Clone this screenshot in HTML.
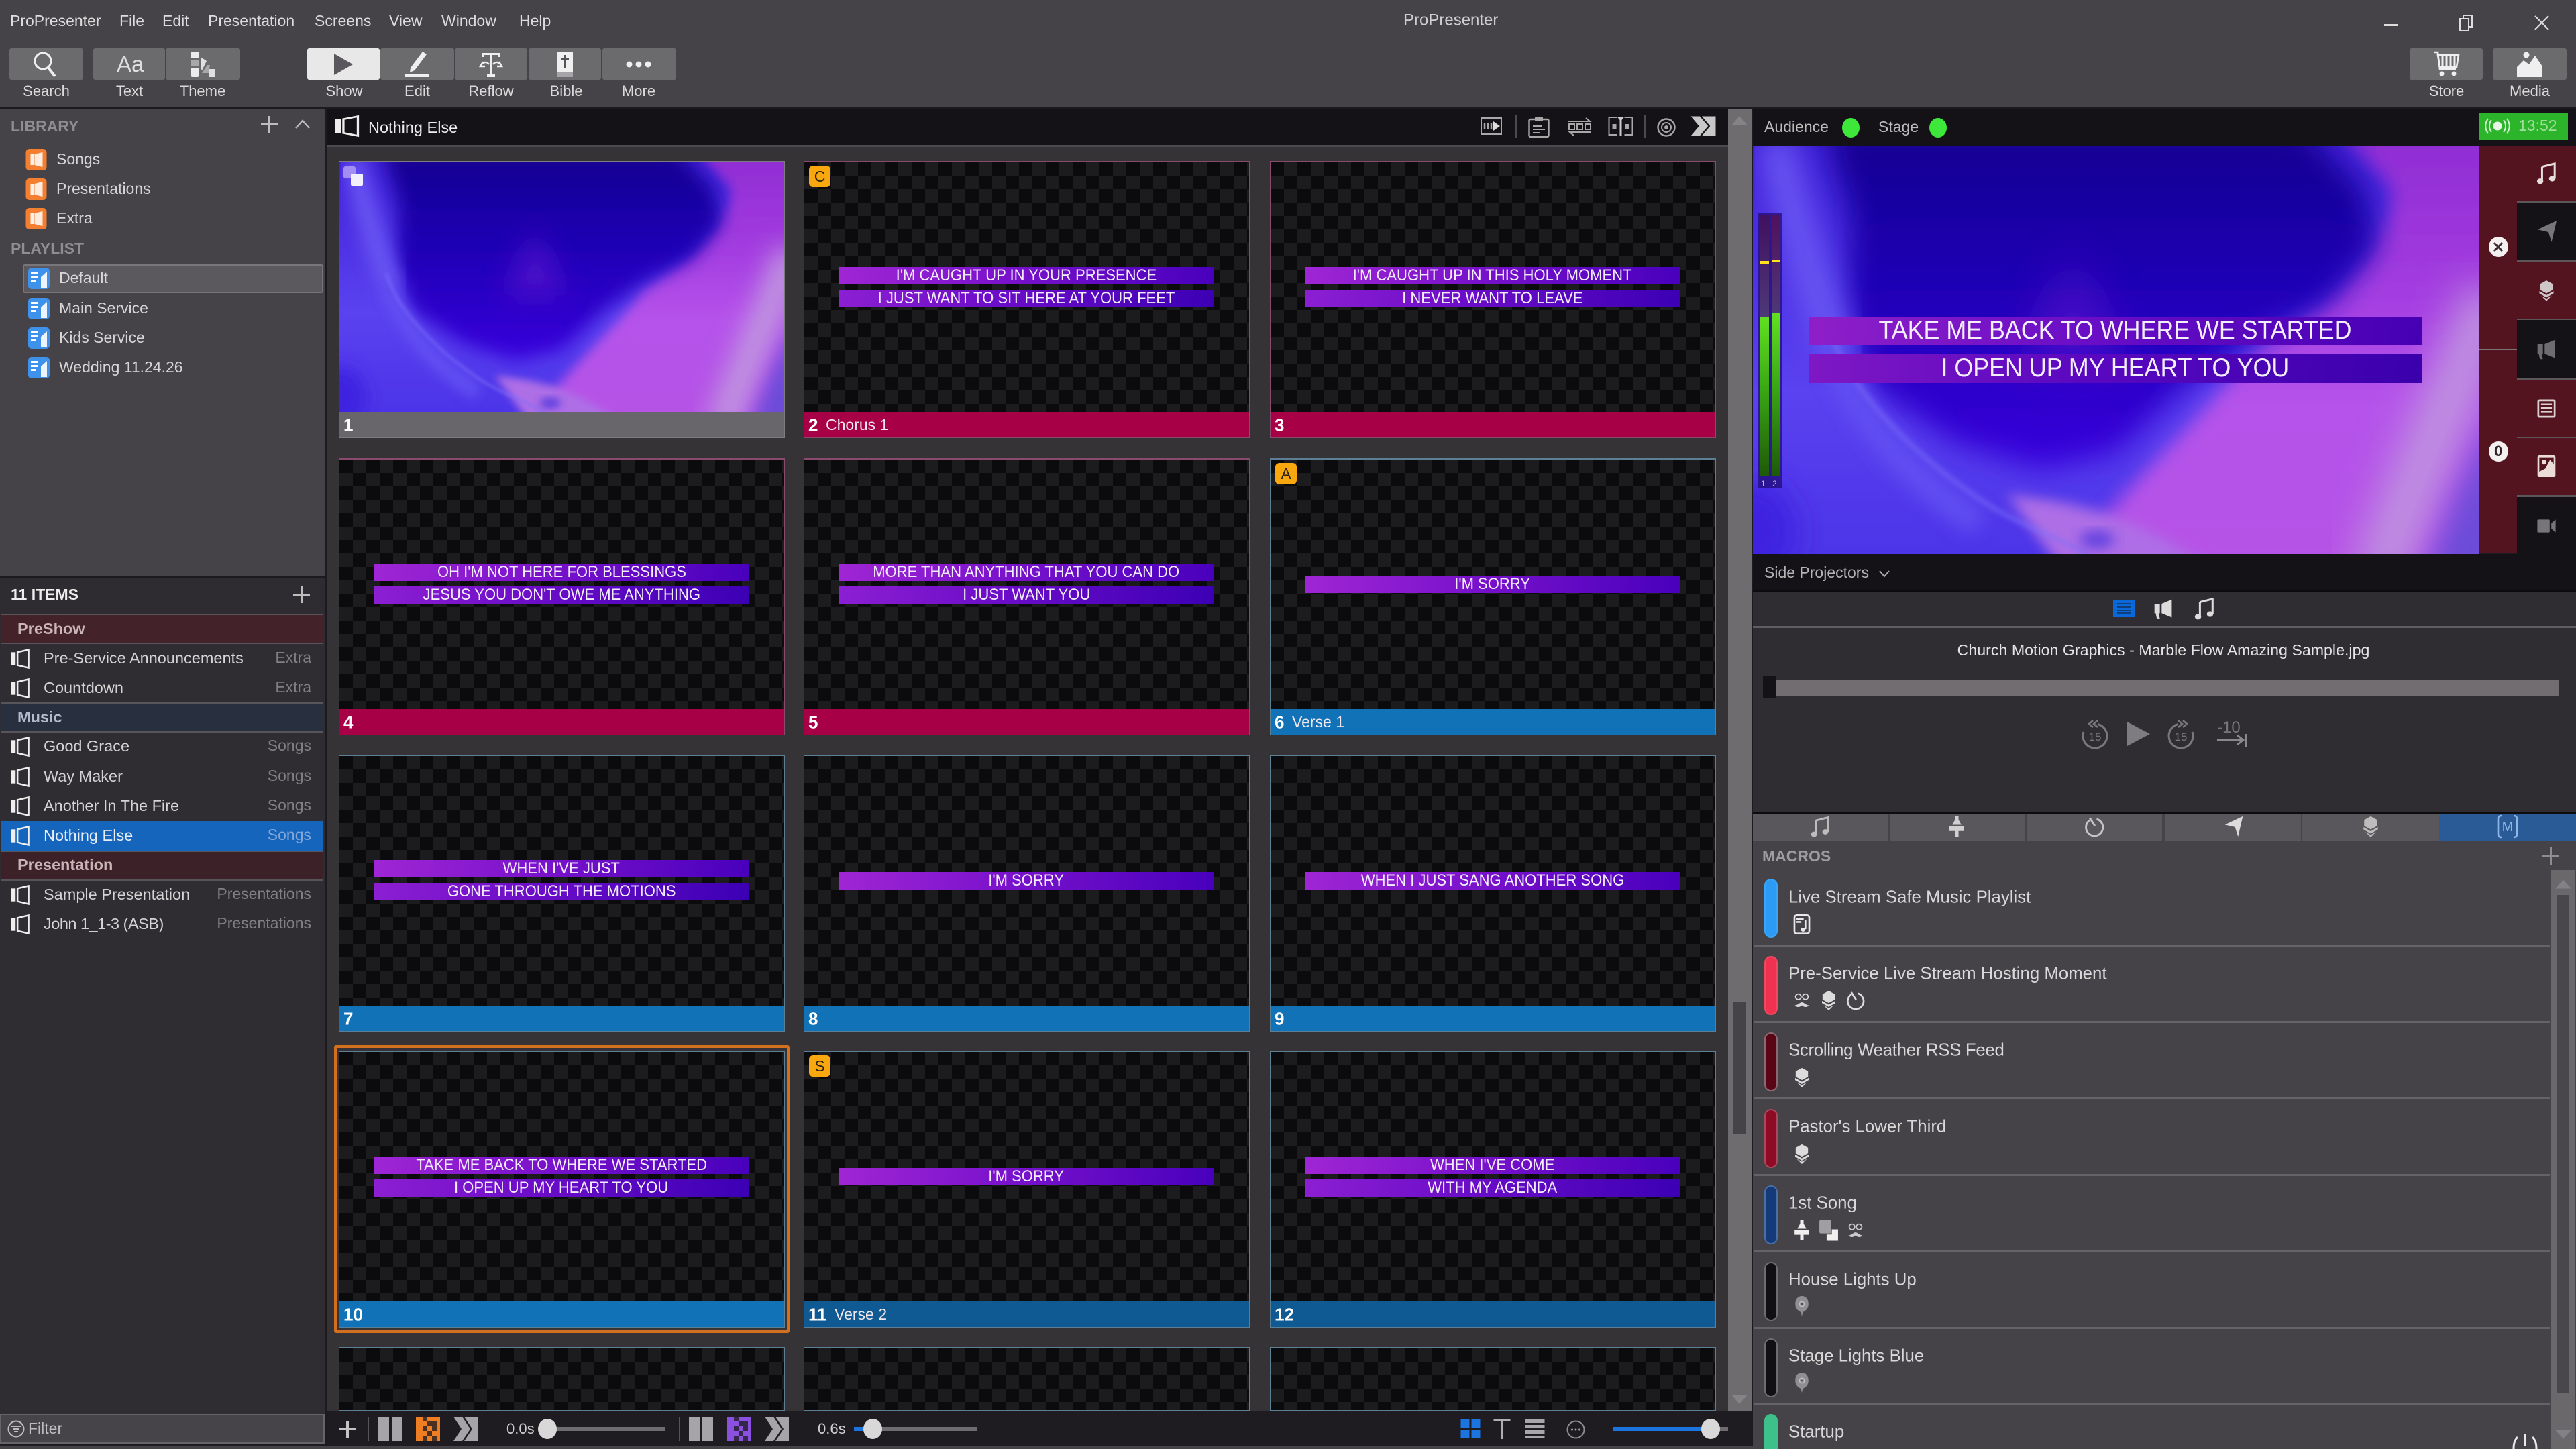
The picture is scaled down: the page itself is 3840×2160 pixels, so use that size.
<!DOCTYPE html>
<html><head><meta charset="utf-8"><title>ProPresenter</title>
<style>
html,body{margin:0;padding:0;background:#1e1c20;width:3840px;height:2160px;overflow:hidden}
#r{position:relative;width:3840px;height:2160px;overflow:hidden;background:#1e1c20;font-family:"Liberation Sans",sans-serif;color:#d8d8d8}
.a{position:absolute}
.t{position:absolute;white-space:nowrap;transform:translateY(-50%);line-height:1.2}
.m{font-size:23px;top:32px;color:#dcdcdc}
.tb{position:absolute;top:72px;height:47px;background:#6b6a6d;border-radius:3px}
.lbl{position:absolute;top:136px;transform:translate(-50%,-50%);font-size:22px;color:#dadada;white-space:nowrap;line-height:1.2}
.ic{position:absolute;transform:translate(-50%,-50%);overflow:visible}
.sec{font-size:23px;font-weight:bold;color:#8f8d90;left:16px}
.ln{font-size:23px;color:#d6d6d6}
.row{font-size:23.5px;color:#d4d4d4;left:65px;margin-top:-1px}
.tag{font-size:23px;color:#827f82;right:3376px;margin-top:-1px}
.hd{position:absolute;left:2px;width:480px;height:41px;border-top:2px solid #575559;border-bottom:2px solid #575559}
.hdt{position:absolute;left:26px;font-size:23.5px;font-weight:bold}
.s{position:absolute;width:665px;height:413px;box-sizing:border-box;overflow:hidden}
.s:before{content:"";position:absolute;left:0;top:0;right:0;bottom:0;z-index:3;border:1px solid #8a4a6e;border-top-width:2px;box-sizing:border-box}
.s.bl:before,.s.db:before{border-color:#5d7f96}
.s.gr:before{border-color:#7e7c7f}
.im{position:absolute;left:1px;top:2px;width:663px;height:372px;background-color:#0b0a0d;background-image:conic-gradient(#1c1b1e 0 25%,#0b0a0d 0 50%,#1c1b1e 0 75%,#0b0a0d 0);background-size:40px 40px}
.b{position:absolute;left:52px;width:558px;height:26px;text-align:center;color:#f2ecf8;font-size:23.7px;line-height:26px;white-space:nowrap}
.b i,.pv i{display:inline-block;font-style:normal;transform:scaleX(.93)}
.b1{background:linear-gradient(97deg,#9f26d4,#7a12cc 45%,#4800bc)}
.b2{background:linear-gradient(97deg,#8c1fd2,#6a0cc8 45%,#3c00b4)}
.lb{position:absolute;left:0;top:374px;width:100%;height:39px;color:#fff}
.pk .lb{background:#a80046}.bl .lb{background:#1272b8}.db .lb{background:#0f5a92}.gr .lb{background:#68666a}
.lb b{position:absolute;left:7px;top:50%;transform:translateY(-50%);font-size:26px;line-height:1.2}
.lb span{position:absolute;left:33px;top:50%;transform:translateY(-50%);font-size:23px;color:#f0e8ee;white-space:nowrap;line-height:1.2}
.bdg{position:absolute;left:8px;top:7px;width:32px;height:32px;border-radius:6px;background:#f9a70f;color:#2c2414;font-size:23px;line-height:32px;text-align:center;z-index:4}
.mp{position:absolute;left:2630px;width:16px;height:84px;border-radius:10px;border:2px solid}
.mt{left:2666px;font-size:25.8px;color:#d8d8d8}
.ms{position:absolute;left:2614px;width:1187px;height:3px;background:#656367}
</style></head><body>
<div id="r">
<svg width="0" height="0" style="position:absolute">
<defs>
<filter id="f40" x="-60%" y="-60%" width="220%" height="220%"><feGaussianBlur stdDeviation="32"/></filter>
<filter id="f22" x="-30%" y="-30%" width="160%" height="160%"><feGaussianBlur stdDeviation="20"/></filter>
<filter id="f30" x="-40%" y="-40%" width="180%" height="180%"><feGaussianBlur stdDeviation="28"/></filter>
<filter id="f14" x="-30%" y="-30%" width="160%" height="160%"><feGaussianBlur stdDeviation="13"/></filter>
<filter id="f7" x="-30%" y="-30%" width="160%" height="160%"><feGaussianBlur stdDeviation="9"/></filter>
<filter id="f3" x="-30%" y="-30%" width="160%" height="160%"><feGaussianBlur stdDeviation="3.5"/></filter>
<linearGradient id="bg1" x1="0" y1="0" x2="0" y2="1"><stop offset="0" stop-color="#12008e"/><stop offset=".45" stop-color="#1e00b4"/><stop offset="1" stop-color="#3800dc"/></linearGradient>
<linearGradient id="bg0" x1="0" y1="0" x2="0" y2="1"><stop offset="0" stop-color="#4020d8"/><stop offset=".6" stop-color="#5a42f0"/><stop offset="1" stop-color="#4c34e8"/></linearGradient>
<linearGradient id="bg2" x1="0" y1="0" x2="0" y2="1"><stop offset="0" stop-color="#8e2bd2"/><stop offset=".35" stop-color="#a23ce0"/><stop offset=".6" stop-color="#b552ea"/><stop offset="1" stop-color="#b654e6"/></linearGradient>
</defs>
<symbol id="marble" viewBox="0 0 1000 562" preserveAspectRatio="none">
<rect width="1000" height="562" fill="url(#bg0)"/>
<path filter="url(#f14)" d="M420 600C500 470 600 400 680 290C760 230 870 170 880 60L800-30L1040-30V600Z" fill="url(#bg2)"/>
<path filter="url(#f30)" d="M1015 200C985 300 925 420 860 600" fill="none" stroke="#c094e0" stroke-width="72"/>
<path filter="url(#f22)" d="M1030 360V600H925C955 510 985 440 1030 360Z" fill="#6a4cd8"/>
<path filter="url(#f7)" d="M350 480C430 490 520 500 640 590H430Z" fill="#ae6ee6"/>
<path filter="url(#f22)" d="M99-30L135 100L128 233L164 334L281 411L398 446L500 423L595 334L682 271L792 217L858 139L843 61L755-30Z" fill="url(#bg1)"/>
<path filter="url(#f40)" d="M440 150L510 300H370Z" fill="#5c14cc" opacity=".75"/>
<path filter="url(#f22)" d="M30-10C60 120 90 220 122 290" fill="none" stroke="#6a58f4" stroke-width="46"/>
<path filter="url(#f14)" d="M110 290C150 380 205 450 310 520" fill="none" stroke="#6250f2" stroke-width="34"/>
<path filter="url(#f3)" d="M105 250C130 330 205 410 300 478C360 522 430 540 470 570" fill="none" stroke="#7e70fa" stroke-width="6" opacity=".6"/>
<ellipse filter="url(#f7)" cx="474" cy="542" rx="24" ry="12" fill="#5e40e0"/>
<ellipse filter="url(#f22)" cx="0" cy="530" rx="60" ry="70" fill="#3c24e0"/>
</symbol>
<symbol id="pres" viewBox="0 0 30 32"><path d="M1 6h7v20H1z" fill="#eee"/><path d="M11 6L28 2V30L11 26Z" fill="none" stroke="#eee" stroke-width="2.6"/></symbol>
<symbol id="lib" viewBox="0 0 31 32"><rect width="31" height="32" rx="5" fill="#f47f31"/><path d="M7 8h5v16H7z" fill="#fff" opacity=".9"/><path d="M13 8L25 5V27L13 24Z" fill="#fff" opacity=".85"/></symbol>
<symbol id="pl" viewBox="0 0 32 32"><rect width="32" height="32" rx="5" fill="#3f92ec"/><path d="M4 6h11v3H4zM4 12h11v3H4zM4 18h8v3H4z" fill="#fff"/><path d="M19 14L28 6V30H19Z" fill="#fff" opacity=".9"/></symbol>
<symbol id="note" viewBox="0 0 32 36"><path d="M9 8L29 3V27" fill="none" stroke="currentColor" stroke-width="3.2"/><path d="M9 8V31" fill="none" stroke="currentColor" stroke-width="3.2"/><ellipse cx="6" cy="31" rx="5" ry="4.4" fill="currentColor"/><ellipse cx="25" cy="27" rx="5" ry="4.4" fill="currentColor"/></symbol>
<symbol id="send" viewBox="0 0 32 36"><path d="M31 1L1 15L18 19L23 35Z" fill="currentColor"/></symbol>
<symbol id="layers" viewBox="0 0 32 36"><path d="M16 1L27 7V17L16 23L5 17V7Z" fill="currentColor"/><path d="M4 19L16 26L28 19V23L16 30L4 23Z" fill="currentColor"/><path d="M7 27L16 32L25 27L16 36Z" fill="currentColor"/></symbol>
<symbol id="mega" viewBox="0 0 32 36"><path d="M1 9h9v16H8l2 9H5l-2-9H1z" fill="currentColor"/><path d="M13 9L30 2V32L13 25Z" fill="currentColor"/></symbol>
<symbol id="doc" viewBox="0 0 30 30"><rect x="1.5" y="1.5" width="27" height="27" rx="2" fill="none" stroke="currentColor" stroke-width="3"/><path d="M6 8h18M6 14h18M6 20h18" stroke="currentColor" stroke-width="2.6"/></symbol>
<symbol id="pic" viewBox="0 0 30 36"><path d="M3 0H27a3 3 0 0 1 3 3V33a3 3 0 0 1-3 3H3a3 3 0 0 1-3-3V3a3 3 0 0 1 3-3Z" fill="currentColor"/><path d="M3 3H27V14L21 7L13 22L3 27Z" fill="#54141f"/><circle cx="11" cy="11" r="4" fill="currentColor"/></symbol>
<symbol id="cam" viewBox="0 0 34 30"><rect x="0" y="3" width="23" height="24" rx="2" fill="currentColor"/><path d="M26 10L34 3V27L26 20Z" fill="currentColor"/></symbol>
<symbol id="spot" viewBox="0 0 26 36"><path d="M10 0h6v6l5 9H5l5-9Z" fill="currentColor"/><path d="M0 17H26V26H16V36H10V26H0Z" fill="currentColor"/></symbol>
<symbol id="clock" viewBox="0 0 34 38"><path d="M21 6A15 15 0 1 1 9 8" fill="none" stroke="currentColor" stroke-width="3.4"/><path d="M9 4L18 18" stroke="currentColor" stroke-width="3.4"/></symbol>
<symbol id="mask" viewBox="0 0 32 32"><circle cx="9" cy="9" r="5.5" fill="none" stroke="currentColor" stroke-width="2.4"/><circle cx="23" cy="9" r="5.5" fill="none" stroke="currentColor" stroke-width="2.4"/><path d="M2 26C8 26 12 20 16 20C20 20 24 26 30 26C26 31 20 30 16 26C12 30 6 31 2 26Z" fill="currentColor"/></symbol>
<symbol id="copy" viewBox="0 0 36 40"><rect x="0" y="0" width="23" height="26" rx="3" fill="#a09ea2"/><path d="M24 18h12v22H14V28h10Z" fill="#f0f0f0"/></symbol>
<symbol id="bulb" viewBox="0 0 26 40"><path d="M13 0C21 0 26 6 26 16C26 26 19 30 15 32L13 40L11 32C7 30 0 26 0 16C0 6 5 0 13 0Z" fill="#908e92"/><circle cx="13" cy="16" r="5" fill="none" stroke="#c0c0c0" stroke-width="2"/><circle cx="13" cy="16" r="1.6" fill="#555"/></symbol>
<symbol id="mlist" viewBox="0 0 28 34"><rect x="1.5" y="1.5" width="25" height="31" rx="4" fill="none" stroke="currentColor" stroke-width="3"/><path d="M5 8h12M5 13h8" stroke="currentColor" stroke-width="3"/><path d="M20 10V25" stroke="currentColor" stroke-width="3"/><ellipse cx="16" cy="26" rx="4" ry="3.4" fill="currentColor"/></symbol>
<symbol id="cuts" viewBox="0 0 36 36"><rect x="0" y="0" width="16" height="36" fill="currentColor"/><rect x="20" y="0" width="16" height="36" fill="currentColor"/></symbol>
<symbol id="chev" viewBox="0 0 36 36"><path d="M0 0H13L25 18L13 36H0L12 18ZM16 0H36V36H16L28 18Z" fill="currentColor"/></symbol>
<symbol id="chk" viewBox="0 0 36 36"><path d="M0 0H36V36H0Z" fill="currentColor"/><path d="M10 0h7v7h-7zM24 7h7v7h-7zM17 7h7v7h-7zM10 14h7v7h-7zM24 14h7v7h-7zM17 21h7v7h-7zM10 28h7v8h-7zM24 28h7v8h-7z" fill="#1e1c20" opacity=".78"/></symbol>
</svg>

<!-- top bar -->
<div class="a" style="left:0;top:0;width:3840px;height:160px;background:#454347"></div>
<div class="a" style="left:0;top:160px;width:3840px;height:2px;background:#1c1a1e"></div>
<div class="t m" style="left:15px">ProPresenter</div>
<div class="t m" style="left:178px">File</div>
<div class="t m" style="left:242px">Edit</div>
<div class="t m" style="left:310px">Presentation</div>
<div class="t m" style="left:469px">Screens</div>
<div class="t m" style="left:580px">View</div>
<div class="t m" style="left:658px">Window</div>
<div class="t m" style="left:774px">Help</div>
<div class="t" style="left:2092px;top:31px;font-size:24px;color:#cfcfcf">ProPresenter</div>
<div class="a" style="left:3554px;top:36px;width:20px;height:3px;background:#ddd"></div>
<svg class="ic" style="left:3676px;top:34px" width="20" height="24" viewBox="0 0 20 24"><rect x="1" y="6" width="13" height="17" fill="none" stroke="#ddd" stroke-width="2"/><path d="M6 5V1H19V18H15" fill="none" stroke="#ddd" stroke-width="2"/></svg>
<svg class="ic" style="left:3789px;top:34px" width="22" height="22" viewBox="0 0 22 22"><path d="M1 1L21 21M21 1L1 21" stroke="#ddd" stroke-width="2"/></svg>

<div class="tb" style="left:14px;width:110px"></div>
<div class="tb" style="left:139px;width:107px"></div>
<div class="tb" style="left:247px;width:111px"></div>
<div class="tb" style="left:458px;width:108px;background:#e8e8e8"></div>
<div class="tb" style="left:567px;width:110px"></div>
<div class="tb" style="left:678px;width:108px"></div>
<div class="tb" style="left:788px;width:108px"></div>
<div class="tb" style="left:898px;width:110px"></div>
<div class="tb" style="left:3592px;width:109px"></div>
<div class="tb" style="left:3716px;width:110px"></div>
<svg class="ic" style="left:68px;top:96px" width="38" height="38" viewBox="0 0 38 38"><circle cx="15" cy="14" r="12" fill="none" stroke="#eee" stroke-width="3"/><path d="M23 24L33 37" stroke="#eee" stroke-width="4"/></svg>
<div class="t" style="left:174px;top:96px;font-size:33px;color:#dedede">Aa</div>
<svg class="ic" style="left:302px;top:96px" width="36" height="38" viewBox="0 0 36 38"><rect x="0" y="0" width="13" height="10" fill="#ececec"/><rect x="0" y="12" width="13" height="10" fill="#a8a8a8"/><rect x="0" y="24" width="13" height="14" rx="3" fill="#ececec"/><path d="M15 8L24 14L17 28L15 24Z" fill="#e0e0e0"/><path d="M17 32L25 20H29L27 32Z" fill="#a8a8a8"/><rect x="28" y="26" width="8" height="12" fill="#e0e0e0"/></svg>
<svg class="ic" style="left:512px;top:96px" width="28" height="32" viewBox="0 0 34 36" preserveAspectRatio="none"><path d="M0 0L34 18L0 36Z" fill="#5a585c"/></svg>
<svg class="ic" style="left:622px;top:96px" width="36" height="38" viewBox="0 0 36 38"><path d="M26 0L32 4L14 28L7 31L8 24Z" fill="#efefef"/><rect x="0" y="33" width="36" height="5" fill="#efefef"/></svg>
<svg class="ic" style="left:732px;top:96px" width="36" height="38" viewBox="0 0 36 38"><path d="M5 2H31V8H28V5H20V34H24V38H12V34H16V5H8V8H5Z" fill="#efefef"/><path d="M2 22C6 14 12 15 15 19M6 15L2 22L9 22M34 22C30 14 24 15 21 19M30 15L34 22L27 22" fill="none" stroke="#efefef" stroke-width="2.4"/></svg>
<svg class="ic" style="left:842px;top:96px" width="30" height="38" viewBox="0 0 30 38"><path d="M3 0H27V30H3Z" fill="#efefef"/><rect x="3" y="31" width="24" height="7" fill="#a6a4a8"/><path d="M13 5h4v5h4v3h-4v11h-4V13H9v-3h4Z" fill="#55535a"/></svg>
<svg class="ic" style="left:952px;top:96px" width="38" height="10" viewBox="0 0 38 10"><circle cx="5" cy="5" r="4.5" fill="#efefef"/><circle cx="19" cy="5" r="4.5" fill="#efefef"/><circle cx="33" cy="5" r="4.5" fill="#efefef"/></svg>
<svg class="ic" style="left:3647px;top:96px" width="38" height="38" viewBox="0 0 38 38"><path d="M0 1H6L9 26H33" fill="none" stroke="#efefef" stroke-width="2.6"/><path d="M6 5H37L34 23H9Z" fill="none" stroke="#efefef" stroke-width="2.6"/><path d="M13 6V22M19 6V22M25 6V22M31 6V22" stroke="#efefef" stroke-width="3"/><circle cx="12" cy="33" r="3.5" fill="#efefef"/><circle cx="30" cy="33" r="3.5" fill="#efefef"/></svg>
<svg class="ic" style="left:3771px;top:96px" width="38" height="38" viewBox="0 0 38 38"><circle cx="14" cy="5" r="4.5" fill="#efefef"/><path d="M0 38V23L10 13L18 19L27 6L38 22V38Z" fill="#efefef"/></svg>
<div class="lbl" style="left:69px">Search</div>
<div class="lbl" style="left:193px">Text</div>
<div class="lbl" style="left:302px">Theme</div>
<div class="lbl" style="left:513px">Show</div>
<div class="lbl" style="left:622px">Edit</div>
<div class="lbl" style="left:732px">Reflow</div>
<div class="lbl" style="left:844px">Bible</div>
<div class="lbl" style="left:952px">More</div>
<div class="lbl" style="left:3647px">Store</div>
<div class="lbl" style="left:3771px">Media</div>

<!-- left panel -->
<div class="a" style="left:0;top:162px;width:484px;height:699px;background:#454347"></div>
<div class="a" style="left:484px;top:162px;width:3px;height:1994px;background:#1c1a1e"></div>
<div class="t sec" style="top:189px">LIBRARY</div>
<div class="a" style="left:389px;top:184px;width:25px;height:3px;background:#bdbdbd"></div>
<div class="a" style="left:400px;top:173px;width:3px;height:25px;background:#bdbdbd"></div>
<svg class="ic" style="left:451px;top:185px" width="22" height="14" viewBox="0 0 22 14"><path d="M1 13L11 2L21 13" fill="none" stroke="#bdbdbd" stroke-width="2.4"/></svg>
<svg class="ic" style="left:54px;top:238px" width="31" height="32"><use href="#lib"/></svg>
<svg class="ic" style="left:54px;top:282px" width="31" height="32"><use href="#lib"/></svg>
<svg class="ic" style="left:54px;top:326px" width="31" height="32"><use href="#lib"/></svg>
<div class="t ln" style="left:84px;top:238px">Songs</div>
<div class="t ln" style="left:84px;top:282px">Presentations</div>
<div class="t ln" style="left:84px;top:326px">Extra</div>
<div class="t sec" style="top:371px">PLAYLIST</div>
<div class="a" style="left:34px;top:394px;width:448px;height:43px;box-sizing:border-box;background:#5b595d;border:2px solid #78767a;border-radius:3px"></div>
<svg class="ic" style="left:58px;top:415px" width="32" height="32"><use href="#pl"/></svg>
<svg class="ic" style="left:58px;top:460px" width="32" height="32"><use href="#pl"/></svg>
<svg class="ic" style="left:58px;top:504px" width="32" height="32"><use href="#pl"/></svg>
<svg class="ic" style="left:58px;top:548px" width="32" height="32"><use href="#pl"/></svg>
<div class="t ln" style="left:88px;top:415px">Default</div>
<div class="t ln" style="left:88px;top:460px">Main Service</div>
<div class="t ln" style="left:88px;top:504px">Kids Service</div>
<div class="t ln" style="left:88px;top:548px">Wedding 11.24.26</div>

<div class="a" style="left:0;top:861px;width:484px;height:54px;background:#2e2c30"></div>
<div class="a" style="left:0;top:859px;width:484px;height:2px;background:#1c1a1e"></div>
<div class="t" style="left:16px;top:887px;font-size:23px;font-weight:bold;color:#eee">11 ITEMS</div>
<div class="a" style="left:437px;top:885px;width:25px;height:3px;background:#bdbdbd"></div>
<div class="a" style="left:448px;top:874px;width:3px;height:25px;background:#bdbdbd"></div>
<div class="a" style="left:0;top:915px;width:484px;height:1193px;background:#2f2d31"></div>
<div class="hd" style="top:915px;background:#442229"></div><div class="t hdt" style="top:937px;color:#c9b4b6">PreShow</div>
<div class="hd" style="top:1047px;background:#28303f"></div><div class="t hdt" style="top:1069px;color:#b4bccb">Music</div>
<div class="hd" style="top:1268px;background:#3c2228"></div><div class="t hdt" style="top:1289px;color:#c9b4b6">Presentation</div>
<div class="a" style="left:2px;top:1224px;width:480px;height:45px;background:#1665bd"></div>
<svg class="ic" style="left:30px;top:982px" width="29" height="32"><use href="#pres"/></svg>
<svg class="ic" style="left:30px;top:1026px" width="29" height="32"><use href="#pres"/></svg>
<svg class="ic" style="left:30px;top:1113px" width="29" height="32"><use href="#pres"/></svg>
<svg class="ic" style="left:30px;top:1158px" width="29" height="32"><use href="#pres"/></svg>
<svg class="ic" style="left:30px;top:1202px" width="29" height="32"><use href="#pres"/></svg>
<svg class="ic" style="left:30px;top:1246px" width="29" height="32"><use href="#pres"/></svg>
<svg class="ic" style="left:30px;top:1334px" width="29" height="32"><use href="#pres"/></svg>
<svg class="ic" style="left:30px;top:1378px" width="29" height="32"><use href="#pres"/></svg>
<div class="t row" style="top:982px">Pre-Service Announcements</div><div class="t tag" style="top:982px">Extra</div>
<div class="t row" style="top:1026px">Countdown</div><div class="t tag" style="top:1026px">Extra</div>
<div class="t row" style="top:1113px">Good Grace</div><div class="t tag" style="top:1113px">Songs</div>
<div class="t row" style="top:1158px">Way Maker</div><div class="t tag" style="top:1158px">Songs</div>
<div class="t row" style="top:1202px">Another In The Fire</div><div class="t tag" style="top:1202px">Songs</div>
<div class="t row" style="top:1246px;color:#e8eef6">Nothing Else</div><div class="t tag" style="top:1246px;color:#84a8d6">Songs</div>
<div class="t row" style="top:1334px">Sample Presentation</div><div class="t tag" style="top:1334px">Presentations</div>
<div class="t row" style="top:1378px;letter-spacing:-.5px">John 1_1-3 (ASB)</div><div class="t tag" style="top:1378px">Presentations</div>
<div class="a" style="left:0;top:2108px;width:484px;height:44px;box-sizing:border-box;background:#464448;border:2px solid #666468"></div>
<svg class="ic" style="left:24px;top:2130px" width="26" height="26" viewBox="0 0 26 26"><circle cx="13" cy="13" r="11.5" fill="none" stroke="#bbb" stroke-width="2"/><path d="M6 9H20M8 13H18M10 17H16" stroke="#bbb" stroke-width="2"/></svg>
<div class="t" style="left:42px;top:2130px;font-size:23px;color:#bdbdbd">Filter</div>

<!-- center -->
<div class="a" style="left:487px;top:162px;width:2125px;height:54px;background:#141216"></div>
<div class="a" style="left:487px;top:216px;width:2089px;height:3px;background:#4c4a4e"></div>
<div class="a" style="left:487px;top:219px;width:2089px;height:1885px;background:#353336"></div>
<svg class="ic" style="left:517px;top:188px" width="38" height="33" viewBox="0 0 30 32" preserveAspectRatio="none"><use href="#pres"/></svg>
<div class="t" style="left:549px;top:190px;font-size:23.5px;color:#eee">Nothing Else</div>
<svg class="ic" style="left:2223px;top:188px" width="32" height="26" viewBox="0 0 32 26"><rect x="1" y="1" width="30" height="24" fill="none" stroke="#a8a8a8" stroke-width="2"/><path d="M6 8v10M11 8v10M16 8v10" stroke="#a8a8a8" stroke-width="2.5"/><path d="M19 6L29 13L19 20Z" fill="#ddd"/></svg>
<div class="a" style="left:2259px;top:172px;width:2px;height:34px;background:#4c4a4e"></div>
<svg class="ic" style="left:2294px;top:189px" width="32" height="32" viewBox="0 0 32 32"><rect x="1.5" y="5" width="29" height="26" rx="2" fill="none" stroke="#a8a8a8" stroke-width="2.4"/><rect x="10" y="1" width="12" height="7" rx="2" fill="#a8a8a8"/><path d="M7 15H20M7 20H25M7 25H18" stroke="#a8a8a8" stroke-width="2"/></svg>
<svg class="ic" style="left:2355px;top:189px" width="38" height="32" viewBox="0 0 38 32"><path d="M2 8H34L28 3M36 24H4L10 29" fill="none" stroke="#a8a8a8" stroke-width="2"/><rect x="3" y="12" width="8" height="8" fill="none" stroke="#a8a8a8" stroke-width="2"/><rect x="15" y="12" width="8" height="8" fill="none" stroke="#a8a8a8" stroke-width="2"/><rect x="27" y="12" width="8" height="8" fill="none" stroke="#a8a8a8" stroke-width="2"/></svg>
<svg class="ic" style="left:2416px;top:188px" width="37" height="30" viewBox="0 0 37 30"><path d="M13 2H1V28H13M24 2H36V28H24" fill="none" stroke="#a8a8a8" stroke-width="2"/><path d="M13 1H24L20 6V30H17V6Z" fill="#ccc"/><rect x="6" y="12" width="6" height="7" fill="#a8a8a8"/><rect x="25" y="12" width="6" height="7" fill="#a8a8a8"/></svg>
<div class="a" style="left:2451px;top:172px;width:2px;height:34px;background:#4c4a4e"></div>
<svg class="ic" style="left:2484px;top:190px" width="28" height="28" viewBox="0 0 28 28"><circle cx="14" cy="14" r="12.5" fill="none" stroke="#a8a8a8" stroke-width="2.4"/><circle cx="14" cy="14" r="7" fill="none" stroke="#a8a8a8" stroke-width="2"/><circle cx="14" cy="14" r="3" fill="#a8a8a8"/></svg>
<svg class="ic" style="left:2539px;top:188px;color:#c8c8c8" width="37" height="29" viewBox="0 0 36 36" preserveAspectRatio="none"><use href="#chev" width="36" height="36"/></svg>

<!-- row 1 -->
<div class="s gr" style="left:505px;top:240px"><div class="im" style="background:none"><svg width="663" height="372" style="display:block"><use href="#marble" width="663" height="372"/></svg><div class="a" style="left:6px;top:6px;width:18px;height:18px;border-radius:3px;background:#a28ef2"></div><div class="a" style="left:17px;top:17px;width:18px;height:18px;border-radius:2px;background:#f2eefc"></div></div><div class="lb"><b>1</b></div></div>
<div class="s pk" style="left:1198px;top:240px"><div class="im"><div class="b b1" style="top:156px"><i>I'M CAUGHT UP IN YOUR PRESENCE</i></div><div class="b b2" style="top:190px"><i>I JUST WANT TO SIT HERE AT YOUR FEET</i></div></div><div class="bdg">C</div><div class="lb"><b>2</b><span>Chorus 1</span></div></div>
<div class="s pk" style="left:1893px;top:240px"><div class="im"><div class="b b1" style="top:156px"><i>I'M CAUGHT UP IN THIS HOLY MOMENT</i></div><div class="b b2" style="top:190px"><i>I NEVER WANT TO LEAVE</i></div></div><div class="lb"><b>3</b></div></div>
<!-- row 2 -->
<div class="s pk" style="left:505px;top:683px"><div class="im"><div class="b b1" style="top:155px"><i>OH I'M NOT HERE FOR BLESSINGS</i></div><div class="b b2" style="top:189px"><i>JESUS YOU DON'T OWE ME ANYTHING</i></div></div><div class="lb"><b>4</b></div></div>
<div class="s pk" style="left:1198px;top:683px"><div class="im"><div class="b b1" style="top:155px"><i>MORE THAN ANYTHING THAT YOU CAN DO</i></div><div class="b b2" style="top:189px"><i>I JUST WANT YOU</i></div></div><div class="lb"><b>5</b></div></div>
<div class="s bl" style="left:1893px;top:683px"><div class="im"><div class="b b1" style="top:173px"><i>I'M SORRY</i></div></div><div class="bdg">A</div><div class="lb"><b>6</b><span>Verse 1</span></div></div>
<!-- row 3 -->
<div class="s bl" style="left:505px;top:1125px"><div class="im"><div class="b b1" style="top:155px"><i>WHEN I'VE JUST</i></div><div class="b b2" style="top:189px"><i>GONE THROUGH THE MOTIONS</i></div></div><div class="lb"><b>7</b></div></div>
<div class="s bl" style="left:1198px;top:1125px"><div class="im"><div class="b b1" style="top:173px"><i>I'M SORRY</i></div></div><div class="lb"><b>8</b></div></div>
<div class="s bl" style="left:1893px;top:1125px"><div class="im"><div class="b b1" style="top:173px"><i>WHEN I JUST SANG ANOTHER SONG</i></div></div><div class="lb"><b>9</b></div></div>
<!-- row 4 -->
<div class="a" style="left:498px;top:1558px;width:679px;height:429px;box-sizing:border-box;border:4px solid #d2701f;border-radius:3px"></div>
<div class="s bl" style="left:505px;top:1566px"><div class="im"><div class="b b1" style="top:156px"><i>TAKE ME BACK TO WHERE WE STARTED</i></div><div class="b b2" style="top:190px"><i>I OPEN UP MY HEART TO YOU</i></div></div><div class="lb"><b>10</b></div></div>
<div class="s db" style="left:1198px;top:1566px"><div class="im"><div class="b b1" style="top:173px"><i>I'M SORRY</i></div></div><div class="bdg">S</div><div class="lb"><b>11</b><span style="left:46px">Verse 2</span></div></div>
<div class="s db" style="left:1893px;top:1566px"><div class="im"><div class="b b1" style="top:156px"><i>WHEN I'VE COME</i></div><div class="b b2" style="top:190px"><i>WITH MY AGENDA</i></div></div><div class="lb"><b>12</b></div></div>
<!-- row 5 -->
<div class="s db" style="left:505px;top:2008px;height:95px"><div class="im" style="height:93px"></div></div>
<div class="s db" style="left:1198px;top:2008px;height:95px"><div class="im" style="height:93px"></div></div>
<div class="s db" style="left:1893px;top:2008px;height:95px"><div class="im" style="height:93px"></div></div>

<!-- scrollbar -->
<div class="a" style="left:2576px;top:162px;width:35px;height:1941px;background:#6e6c6f"></div>
<svg class="ic" style="left:2593px;top:180px" width="24" height="14" viewBox="0 0 24 14"><path d="M0 14L12 0L24 14Z" fill="#858386"/></svg>
<div class="a" style="left:2583px;top:1494px;width:20px;height:196px;background:#454347"></div>
<svg class="ic" style="left:2593px;top:2086px" width="24" height="14" viewBox="0 0 24 14"><path d="M0 0L12 14L24 0Z" fill="#858386"/></svg>
<div class="a" style="left:2611px;top:162px;width:2px;height:1994px;background:#1c1a1e"></div>

<!-- bottom bar -->
<div class="a" style="left:487px;top:2103px;width:2124px;height:52px;background:#1e1c20"></div>
<div class="a" style="left:506px;top:2128px;width:25px;height:4px;background:#c4c4c4"></div>
<div class="a" style="left:516px;top:2118px;width:4px;height:25px;background:#c4c4c4"></div>
<div class="a" style="left:548px;top:2112px;width:2px;height:36px;background:#555"></div>
<svg class="ic" style="left:582px;top:2130px;color:#a6a4a8" width="36" height="36"><use href="#cuts"/></svg>
<svg class="ic" style="left:638px;top:2130px;color:#ef7d22" width="36" height="36"><use href="#chk"/></svg>
<svg class="ic" style="left:694px;top:2130px;color:#a6a4a8" width="36" height="36"><use href="#chev"/></svg>
<div class="t" style="left:755px;top:2130px;font-size:22px;color:#cfcfcf">0.0s</div>
<div class="a" style="left:816px;top:2127px;width:176px;height:6px;background:#6e6c6f"></div>
<div class="a" style="left:802px;top:2115px;width:28px;height:30px;border-radius:50%;background:#d8d8d8"></div>
<div class="a" style="left:1012px;top:2112px;width:2px;height:36px;background:#555"></div>
<svg class="ic" style="left:1045px;top:2130px;color:#a6a4a8" width="36" height="36"><use href="#cuts"/></svg>
<svg class="ic" style="left:1102px;top:2130px;color:#8a50e0" width="36" height="36"><use href="#chk"/></svg>
<svg class="ic" style="left:1158px;top:2130px;color:#a6a4a8" width="36" height="36"><use href="#chev"/></svg>
<div class="t" style="left:1219px;top:2130px;font-size:22px;color:#cfcfcf">0.6s</div>
<div class="a" style="left:1273px;top:2127px;width:27px;height:6px;background:#1b74e0"></div>
<div class="a" style="left:1300px;top:2127px;width:156px;height:6px;background:#6e6c6f"></div>
<div class="a" style="left:1287px;top:2115px;width:28px;height:30px;border-radius:50%;background:#d8d8d8"></div>
<svg class="ic" style="left:2192px;top:2130px" width="29" height="28" viewBox="0 0 29 28"><path d="M0 0H13V13H0ZM16 0H29V13H16ZM0 15H13V28H0ZM16 15H29V28H16Z" fill="#1b74e0"/></svg>
<svg class="ic" style="left:2239px;top:2130px" width="25" height="30" viewBox="0 0 25 30"><path d="M0 0H25V3H14V30H11V3H0Z" fill="#b0aeb2"/></svg>
<svg class="ic" style="left:2288px;top:2130px" width="29" height="28" viewBox="0 0 29 28"><path d="M0 0H29V5H0ZM0 8H29V13H0ZM0 16H29V21H0ZM0 24H29V28H0Z" fill="#a8a6aa"/></svg>
<svg class="ic" style="left:2349px;top:2131px" width="28" height="28" viewBox="0 0 28 28"><circle cx="14" cy="14" r="12.5" fill="none" stroke="#8e8c90" stroke-width="2"/><circle cx="8.5" cy="14" r="1.5" fill="#a8a6aa"/><circle cx="14" cy="14" r="1.5" fill="#a8a6aa"/><circle cx="19.5" cy="14" r="1.5" fill="#a8a6aa"/></svg>
<div class="a" style="left:2404px;top:2127px;width:145px;height:6px;background:#1b74e0"></div>
<div class="a" style="left:2549px;top:2127px;width:27px;height:6px;background:#6e6c6f"></div>
<div class="a" style="left:2536px;top:2115px;width:28px;height:30px;border-radius:50%;background:#d8d8d8"></div>

<!-- right panel header -->
<div class="a" style="left:2613px;top:162px;width:1227px;height:56px;background:#141216"></div>
<div class="t" style="left:2630px;top:190px;font-size:23px;color:#bcbcbc">Audience</div>
<div class="a" style="left:2746px;top:176px;width:26px;height:29px;border-radius:50%;background:#3de83a"></div>
<div class="t" style="left:2800px;top:190px;font-size:23px;color:#bcbcbc">Stage</div>
<div class="a" style="left:2876px;top:176px;width:26px;height:29px;border-radius:50%;background:#3de83a"></div>
<div class="a" style="left:3696px;top:168px;width:132px;height:40px;background:#2cb52a"></div>
<svg class="ic" style="left:3723px;top:188px" width="38" height="24" viewBox="0 0 38 24"><circle cx="19" cy="12" r="6.5" fill="#e8f4e6"/><path d="M10 3C6 8 6 16 10 21M28 3C32 8 32 16 28 21M5 1C0 8 0 16 5 23M33 1C38 8 38 16 33 23" fill="none" stroke="#d8f0d4" stroke-width="2"/></svg>
<div class="t" style="left:3754px;top:188px;font-size:23px;color:#a0de9c">13:52</div>

<!-- preview -->
<div class="a pv" style="left:2613px;top:218px;width:1083px;height:608px;overflow:hidden">
<svg width="1083" height="608" style="display:block"><use href="#marble" width="1083" height="608"/></svg>
<div class="a" style="left:83px;top:254px;width:914px;height:42px;background:linear-gradient(97deg,#8f1fc8,#6a0ec6 45%,#4600b4);color:#f4eefa;font-size:38.5px;line-height:41px;text-align:center;white-space:nowrap"><i>TAKE ME BACK TO WHERE WE STARTED</i></div>
<div class="a" style="left:83px;top:310px;width:914px;height:43px;background:linear-gradient(97deg,#7f18c4,#5a08c0 45%,#3a00ac);color:#f4eefa;font-size:38.5px;line-height:42px;text-align:center;white-space:nowrap"><i>I OPEN UP MY HEART TO YOU</i></div>
<div class="a" style="left:8px;top:100px;width:35px;height:409px;background:rgba(30,10,110,.7)"></div>
<div class="a" style="left:11px;top:102px;width:13px;height:389px;background:linear-gradient(#40105e,#4e3a78 40%,#485078 70%)"></div>
<div class="a" style="left:28px;top:102px;width:12px;height:389px;background:linear-gradient(#50105e,#4e3a78 40%,#485078 70%)"></div>
<div class="a" style="left:11px;top:254px;width:13px;height:237px;background:linear-gradient(#62e020,#3aa814 45%,#1e5a08)"></div>
<div class="a" style="left:28px;top:248px;width:12px;height:243px;background:linear-gradient(#62e020,#3aa814 45%,#1e5a08)"></div>
<div class="a" style="left:11px;top:171px;width:13px;height:4px;background:#ffe21a"></div>
<div class="a" style="left:28px;top:169px;width:12px;height:4px;background:#ffe21a"></div>
<div class="t" style="left:12px;top:503px;font-size:12px;color:#bbb">1</div>
<div class="t" style="left:29px;top:503px;font-size:12px;color:#bbb">2</div>
</div>
<!-- side strip -->
<div class="a" style="left:3696px;top:218px;width:144px;height:606px;background:#54141f"></div>
<div class="a" style="left:3752px;top:302px;width:88px;height:86px;background:#141216"></div>
<div class="a" style="left:3752px;top:477px;width:88px;height:87px;background:#141216"></div>
<div class="a" style="left:3752px;top:741px;width:88px;height:85px;background:#141216"></div>
<div class="a" style="left:3752px;top:299px;width:88px;height:3px;background:#5a5659"></div>
<div class="a" style="left:3752px;top:388px;width:88px;height:2px;background:#5a5659"></div>
<div class="a" style="left:3752px;top:475px;width:88px;height:2px;background:#5a5659"></div>
<div class="a" style="left:3752px;top:564px;width:88px;height:2px;background:#5a5659"></div>
<div class="a" style="left:3752px;top:651px;width:88px;height:2px;background:#5a5659"></div>
<div class="a" style="left:3752px;top:738px;width:88px;height:3px;background:#5a5659"></div>
<div class="a" style="left:3696px;top:520px;width:56px;height:2px;background:#777"></div>
<svg class="ic" style="left:3796px;top:258px;color:#e6dcdc" width="30" height="34"><use href="#note"/></svg>
<svg class="ic" style="left:3797px;top:345px;color:#77757a" width="30" height="34"><use href="#send"/></svg>
<svg class="ic" style="left:3796px;top:433px;color:#cfc6c8" width="28" height="32"><use href="#layers"/></svg>
<svg class="ic" style="left:3796px;top:521px;color:#6e6c70" width="30" height="32"><use href="#mega"/></svg>
<svg class="ic" style="left:3796px;top:609px;color:#dcd0d0" width="28" height="27"><use href="#doc"/></svg>
<svg class="ic" style="left:3796px;top:695px;color:#ecdcd8" width="28" height="32"><use href="#pic"/></svg>
<svg class="ic" style="left:3796px;top:784px;color:#77757a" width="30" height="24"><use href="#cam"/></svg>
<div class="a" style="left:3710px;top:353px;width:29px;height:30px;border-radius:50%;background:#f4f0f0"></div>
<svg class="ic" style="left:3724px;top:368px" width="15" height="15" viewBox="0 0 15 15"><path d="M1.5 1.5L13.5 13.5M13.5 1.5L1.5 13.5" stroke="#3a2a2e" stroke-width="3"/></svg>
<div class="a" style="left:3710px;top:658px;width:29px;height:30px;border-radius:50%;background:#f4f0f0"></div>
<div class="t" style="left:3724px;top:673px;font-size:22px;font-weight:bold;color:#2e2226;margin-left:-6px">0</div>

<!-- side projectors -->
<div class="a" style="left:2613px;top:826px;width:1227px;height:54px;background:#141216"></div>
<div class="t" style="left:2630px;top:854px;font-size:23px;color:#b4b4b4">Side Projectors</div>
<svg class="ic" style="left:2809px;top:855px" width="16" height="10" viewBox="0 0 16 10"><path d="M1 1L8 9L15 1" fill="none" stroke="#aaa" stroke-width="2"/></svg>
<div class="a" style="left:2613px;top:880px;width:1227px;height:3px;background:#0c0b0d"></div>
<div class="a" style="left:2613px;top:883px;width:1227px;height:327px;background:#2f2d31"></div>
<div class="a" style="left:2613px;top:933px;width:1227px;height:3px;background:#5f5d61"></div>
<div class="a" style="left:3150px;top:894px;width:32px;height:26px;background:#0a68d8"></div>
<svg class="ic" style="left:3166px;top:907px;color:#0e3f7a" width="20" height="16" viewBox="0 0 20 16"><path d="M0 1H20M0 6H20M0 11H20M0 15H20" stroke="currentColor" stroke-width="2"/></svg>
<svg class="ic" style="left:3225px;top:908px;color:#dcdcdc" width="32" height="32"><use href="#mega"/></svg>
<svg class="ic" style="left:3286px;top:907px;color:#dcdcdc" width="32" height="34"><use href="#note"/></svg>
<div class="t" style="left:3225px;top:970px;font-size:23.2px;color:#e4e4e4;transform:translate(-50%,-50%)">Church Motion Graphics - Marble Flow Amazing Sample.jpg</div>
<div class="a" style="left:2648px;top:1014px;width:1166px;height:24px;background:#716d71"></div>
<div class="a" style="left:2628px;top:1008px;width:20px;height:33px;background:#141216"></div>
<svg class="ic" style="left:3123px;top:1094px" width="40" height="46" viewBox="0 0 40 46"><path d="M24 8.5A18 18 0 1 1 3 20" fill="none" stroke="#7a787c" stroke-width="3"/><path d="M17 3L11 8L17 13M24 3L18 8L24 13" fill="none" stroke="#7a787c" stroke-width="2.5"/><text x="20" y="33" font-size="17" fill="#7a787c" text-anchor="middle" font-family="Liberation Sans">15</text></svg>
<svg class="ic" style="left:3188px;top:1094px" width="34" height="36" viewBox="0 0 34 36"><path d="M0 0L34 18L0 36Z" fill="#7e7c80"/></svg>
<svg class="ic" style="left:3251px;top:1094px" width="40" height="46" viewBox="0 0 40 46"><path d="M16 8.5A18 18 0 1 0 37 20" fill="none" stroke="#7a787c" stroke-width="3"/><path d="M23 3L29 8L23 13M16 3L22 8L16 13" fill="none" stroke="#7a787c" stroke-width="2.5"/><text x="20" y="33" font-size="17" fill="#7a787c" text-anchor="middle" font-family="Liberation Sans">15</text></svg>
<svg class="ic" style="left:3328px;top:1094px" width="46" height="46" viewBox="0 0 46 46"><text x="0" y="21" font-size="24" fill="#77757a" font-family="Liberation Sans">-10</text><path d="M0 32H38M30 25L39 32L30 39M43 23V42" fill="none" stroke="#8a888c" stroke-width="2.8"/></svg>

<!-- tabs -->
<div class="a" style="left:2613px;top:1210px;width:1227px;height:3px;background:#0c0b0d"></div>
<div class="a" style="left:2613px;top:1213px;width:1227px;height:40px;background:#59575b"></div>
<div class="a" style="left:2815px;top:1213px;width:2px;height:40px;background:#454347"></div>
<div class="a" style="left:3019px;top:1213px;width:2px;height:40px;background:#454347"></div>
<div class="a" style="left:3223px;top:1213px;width:4px;height:40px;background:#454347"></div>
<div class="a" style="left:3430px;top:1213px;width:2px;height:40px;background:#454347"></div>
<div class="a" style="left:3636px;top:1213px;width:204px;height:40px;background:#2b5b96"></div>
<svg class="ic" style="left:2713px;top:1232px;color:#bdbdbd" width="30" height="32"><use href="#note"/></svg>
<svg class="ic" style="left:2917px;top:1232px;color:#d0d0d0" width="22" height="32"><use href="#spot"/></svg>
<svg class="ic" style="left:3122px;top:1232px;color:#c4c4c4" width="32" height="32"><use href="#clock"/></svg>
<svg class="ic" style="left:3330px;top:1232px;color:#dcdcdc" width="30" height="32"><use href="#send"/></svg>
<svg class="ic" style="left:3534px;top:1232px;color:#bdbdbd" width="30" height="32"><use href="#layers"/></svg>
<svg class="ic" style="left:3738px;top:1232px" width="34" height="34" viewBox="0 0 34 34"><path d="M8 1C4 1 3 3 3 6V28C3 31 4 33 8 33M26 1C30 1 31 3 31 6V28C31 31 30 33 26 33" fill="none" stroke="#8fb6e4" stroke-width="2.6"/><text x="17" y="24" font-size="20" fill="#8fb6e4" text-anchor="middle" font-family="Liberation Sans">M</text></svg>

<!-- macros -->
<div class="a" style="left:2613px;top:1253px;width:1227px;height:907px;background:#454347"></div>
<div class="t" style="left:2627px;top:1277px;font-size:23px;font-weight:bold;color:#9e9ca0">MACROS</div>
<div class="a" style="left:3789px;top:1274px;width:26px;height:3px;background:#8e8c90"></div>
<div class="a" style="left:3801px;top:1263px;width:3px;height:26px;background:#8e8c90"></div>
<div class="a" style="left:3803px;top:1297px;width:35px;height:863px;background:#6a686b"></div>
<svg class="ic" style="left:3821px;top:1318px" width="24" height="13" viewBox="0 0 24 13"><path d="M0 13L12 0L24 13Z" fill="#838185"/></svg>
<div class="a" style="left:3812px;top:1334px;width:18px;height:742px;background:#49474b"></div>
<svg class="ic" style="left:3821px;top:2138px" width="24" height="13" viewBox="0 0 24 13"><path d="M0 0L12 13L24 0Z" fill="#838185"/></svg>

<div class="mp" style="top:1310px;background:#2c9bf5;border-color:#3aa4f8"></div>
<div class="t mt" style="top:1338px">Live Stream Safe Music Playlist</div>
<svg class="ic" style="left:2686px;top:1378px;color:#e8e8e8" width="28" height="30"><use href="#mlist"/></svg>
<div class="ms" style="top:1408px"></div>
<div class="mp" style="top:1425px;background:#f0314f;border-color:#ee4a62"></div>
<div class="t mt" style="top:1452px">Pre-Service Live Stream Hosting Moment</div>
<svg class="ic" style="left:2686px;top:1491px;color:#d8d8d8" width="26" height="24"><use href="#mask"/></svg>
<svg class="ic" style="left:2726px;top:1491px;color:#dcdcdc" width="27" height="30"><use href="#layers"/></svg>
<svg class="ic" style="left:2766px;top:1491px;color:#dcdcdc" width="28" height="30"><use href="#clock"/></svg>
<div class="ms" style="top:1522px"></div>
<div class="mp" style="top:1539px;background:#5a0516;border-color:#8a6a72"></div>
<div class="t mt" style="top:1566px;letter-spacing:-.3px">Scrolling Weather RSS Feed</div>
<svg class="ic" style="left:2686px;top:1606px;color:#dcdcdc" width="27" height="30"><use href="#layers"/></svg>
<div class="ms" style="top:1636px"></div>
<div class="mp" style="top:1653px;background:#8e0a25;border-color:#a84a5e"></div>
<div class="t mt" style="top:1680px">Pastor's Lower Third</div>
<svg class="ic" style="left:2686px;top:1720px;color:#dcdcdc" width="27" height="30"><use href="#layers"/></svg>
<div class="ms" style="top:1750px"></div>
<div class="mp" style="top:1767px;background:#143a7a;border-color:#4a6ea6"></div>
<div class="t mt" style="top:1794px">1st Song</div>
<svg class="ic" style="left:2686px;top:1834px;color:#efefef" width="22" height="30"><use href="#spot"/></svg>
<svg class="ic" style="left:2726px;top:1834px" width="28" height="31"><use href="#copy"/></svg>
<svg class="ic" style="left:2766px;top:1834px;color:#c8c8c8" width="26" height="24"><use href="#mask"/></svg>
<div class="ms" style="top:1864px"></div>
<div class="mp" style="top:1881px;background:#101014;border-color:#6e6c70"></div>
<div class="t mt" style="top:1908px">House Lights Up</div>
<svg class="ic" style="left:2686px;top:1947px" width="26" height="30"><use href="#bulb"/></svg>
<div class="ms" style="top:1978px"></div>
<div class="mp" style="top:1995px;background:#101014;border-color:#6e6c70"></div>
<div class="t mt" style="top:2022px">Stage Lights Blue</div>
<svg class="ic" style="left:2686px;top:2061px" width="26" height="30"><use href="#bulb"/></svg>
<div class="ms" style="top:2092px"></div>
<div class="mp" style="top:2108px;height:48px;background:#3dc08a;border-color:#3dc08a;border-radius:10px 10px 0 0"></div>
<div class="t mt" style="top:2135px">Startup</div>
<svg class="a" style="left:3745px;top:2138px" width="38" height="22" viewBox="0 0 38 22"><path d="M8 4C3 9 2 15 2 22M30 4C35 9 36 15 36 22M19 0V18" fill="none" stroke="#e8e8e8" stroke-width="3"/></svg>
<div class="a" style="left:0;top:2156px;width:2613px;height:4px;background:#454347"></div>
</div>
</body></html>
